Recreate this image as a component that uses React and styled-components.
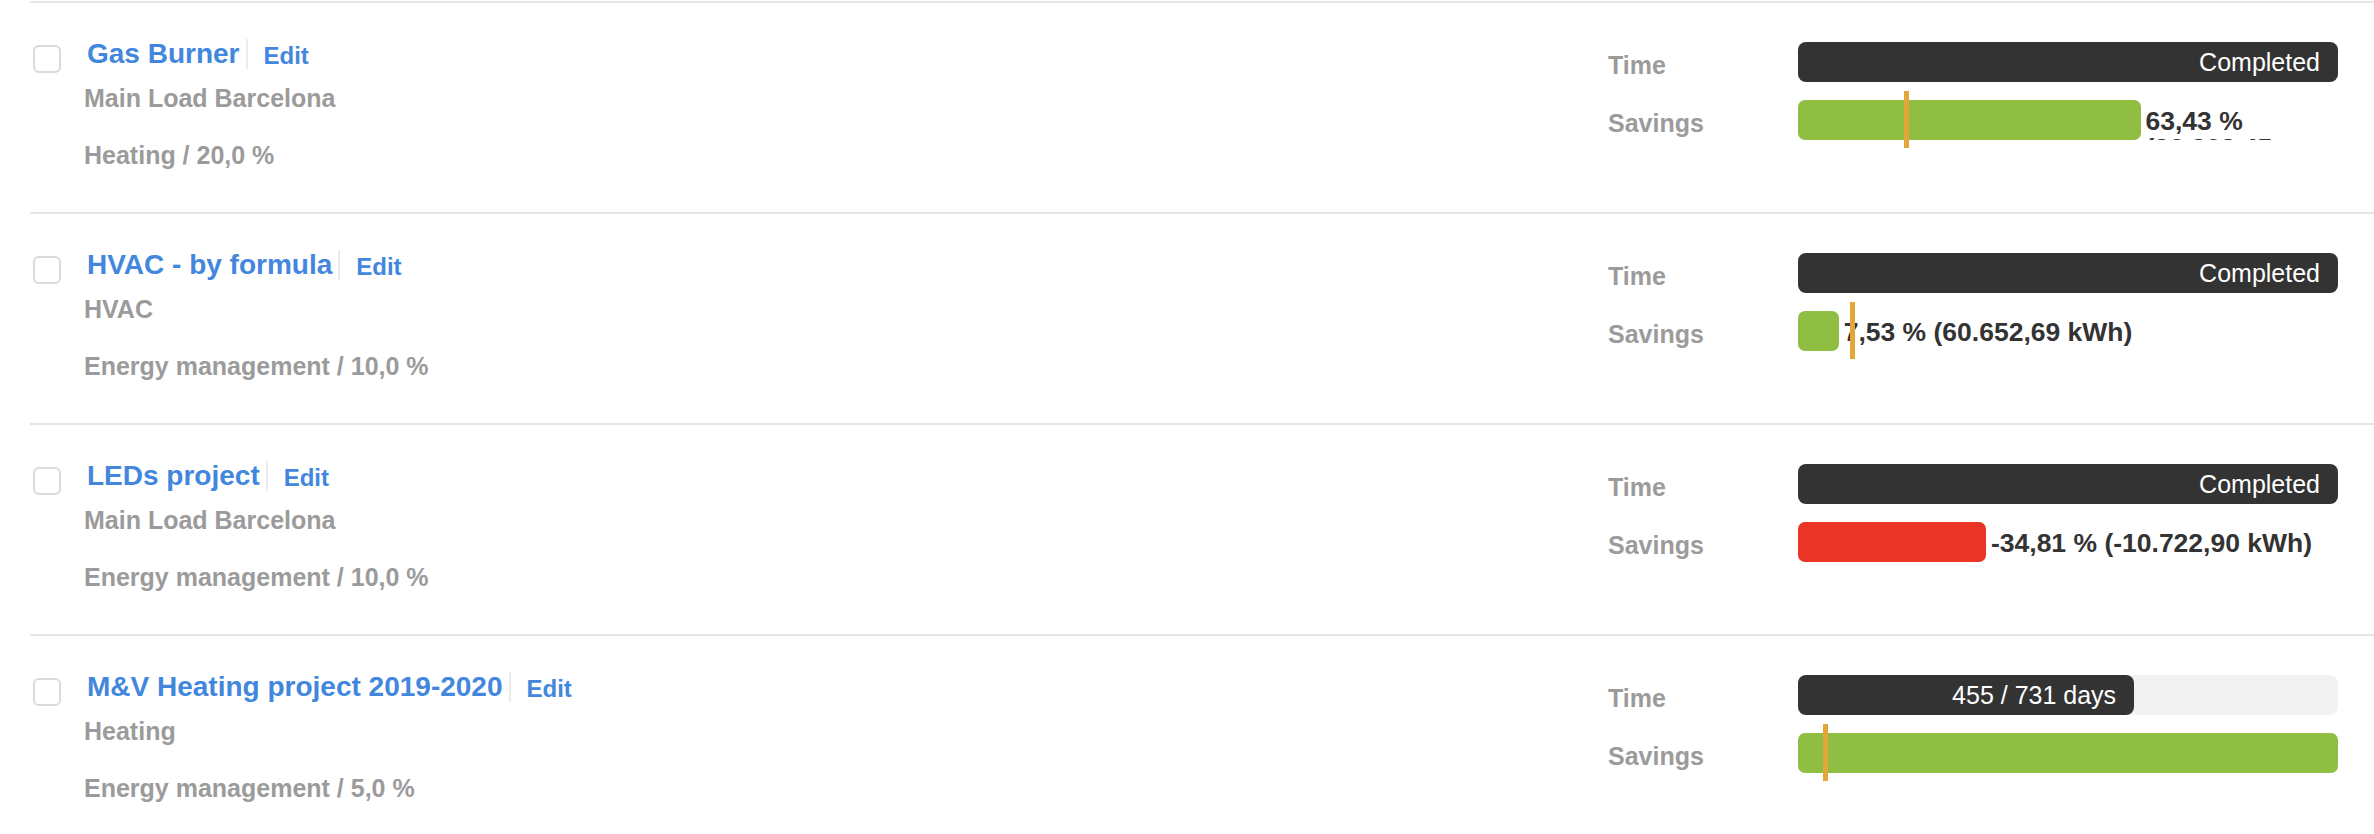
import React from 'react';
import styled, { createGlobalStyle } from 'styled-components';

const BLUE = '#4287dd';
const GRAY = '#9b9b9b';
const DARK = '#333333';
const GREEN = '#8fbe43';
const RED = '#e93426';
const ORANGE = '#e2a63b';

const GlobalStyle = createGlobalStyle`
  html, body {
    margin: 0;
    padding: 0;
    overflow: hidden;
    background: #fff;
  }

  body {
    font-family: "Liberation Sans", Arial, sans-serif;
  }
`;

const ProjectList = styled.ul`
  list-style: none;
  margin: 0 0 0 30px;
  padding: 1px 0 0;
`;

const ProjectRow = styled.li`
  display: flex;
  align-items: flex-start;
  box-sizing: border-box;
  height: 211px;
  border-top: 2px solid #e6e6e6;
`;

const Checkbox = styled.input.attrs({ type: 'checkbox' })`
  appearance: none;
  flex-shrink: 0;
  box-sizing: border-box;
  width: 28px;
  height: 28px;
  margin: 42px 0 0 3px;
  border: 2px solid #dadada;
  border-radius: 6px;
  background: #fff;
`;

const Info = styled.div`
  display: flex;
  flex-direction: column;
  margin-left: 23px;
  padding-top: 36px;
`;

const TitleLine = styled.div`
  display: flex;
  align-items: flex-start;
  padding-left: 3px;
`;

const Title = styled.a`
  padding-right: 6px;
  border-right: 2px solid #ececec;
  color: ${BLUE};
  font-size: 28px;
  font-weight: 700;
  line-height: 30px;
  text-decoration: none;
  white-space: nowrap;
`;

const EditLink = styled.a`
  margin-left: 16px;
  padding-top: 2px;
  color: ${BLUE};
  font-size: 24px;
  font-weight: 700;
  line-height: 30px;
  text-decoration: none;
`;

const Sub = styled.div`
  margin-top: ${({ $top }) => $top}px;
  color: ${GRAY};
  font-size: 25px;
  font-weight: 700;
  line-height: 30px;
  white-space: nowrap;
`;

const Stats = styled.div`
  display: grid;
  grid-template-columns: 190px 540px;
  row-gap: 18px;
  margin-left: auto;
  padding: 39px 36px 0 0;
`;

const StatLabel = styled.div`
  box-sizing: border-box;
  height: 40px;
  padding-top: 6px;
  color: ${GRAY};
  font-size: 25px;
  font-weight: 700;
  line-height: 34px;
`;

const TimeTrack = styled.div`
  height: 40px;
  border-radius: 8px;
  background: #f2f2f2;
`;

const TimeFill = styled.div`
  box-sizing: border-box;
  height: 100%;
  padding-right: 18px;
  border-radius: 8px;
  background: ${DARK};
  color: #fff;
  font-size: 25px;
  line-height: 40px;
  text-align: right;
  white-space: nowrap;
`;

const SavingsTrack = styled.div`
  position: relative;
  height: 40px;
`;

const SavingsClip = styled.div`
  display: flex;
  height: 40px;
  overflow: hidden;
`;

const SavingsBar = styled.div`
  flex-shrink: 0;
  height: 40px;
  border-radius: 7px;
  background: ${({ $negative }) => ($negative ? RED : GREEN)};
`;

const SavingsValue = styled.div`
  flex: 1 1 0;
  min-width: 0;
  margin-left: 5px;
  padding-top: 8px;
  color: ${DARK};
  font-size: 26.5px;
  font-weight: 700;
  line-height: 27.3px;
`;

const TargetMarker = styled.span`
  position: absolute;
  top: -9px;
  z-index: 1;
  width: 5px;
  height: 57px;
  background: ${ORANGE};
`;

const projects = [
  {
    id: 1,
    name: 'Gas Burner',
    load: 'Main Load Barcelona',
    category: 'Heating / 20,0 %',
    target: 20,
    days: null,
    savings: 63.43,
    savingsText: '63,43 % (26.308,45 kWh)'
  },
  {
    id: 2,
    name: 'HVAC - by formula',
    load: 'HVAC',
    category: 'Energy management / 10,0 %',
    target: 10,
    days: null,
    savings: 7.53,
    savingsText: '7,53 % (60.652,69 kWh)'
  },
  {
    id: 3,
    name: 'LEDs project',
    load: 'Main Load Barcelona',
    category: 'Energy management / 10,0 %',
    target: 10,
    days: null,
    savings: -34.81,
    savingsText: '-34,81 % (-10.722,90 kWh)'
  },
  {
    id: 4,
    name: 'M&V Heating project 2019-2020',
    load: 'Heating',
    category: 'Energy management / 5,0 %',
    target: 5,
    days: { done: 455, total: 731 },
    savings: 148.2,
    savingsText: null
  }
];

const ProjectStats = ({ target, days, savings, savingsText }) => {
  const timeWidth = days ? (days.done / days.total) * 100 : 100;
  const negative = savings < 0;
  const barWidth = Math.min(Math.abs(savings), 100);

  return (
    <Stats>
      <StatLabel>Time</StatLabel>
      <TimeTrack>
        <TimeFill style={{ width: `${timeWidth}%` }}>
          {days ? `${days.done} / ${days.total} days` : 'Completed'}
        </TimeFill>
      </TimeTrack>

      <StatLabel>Savings</StatLabel>
      <SavingsTrack>
        <SavingsClip>
          <SavingsBar $negative={negative} style={{ width: `${barWidth}%` }} />
          {savingsText && <SavingsValue>{savingsText}</SavingsValue>}
        </SavingsClip>
        {!negative && (
          <TargetMarker style={{ left: `calc(${target}% - 2px)` }} />
        )}
      </SavingsTrack>
    </Stats>
  );
};

const App = () => (
  <>
    <GlobalStyle />
    <ProjectList>
      {projects.map(({ id, name, load, category, ...stats }) => (
        <ProjectRow key={id}>
          <Checkbox />
          <Info>
            <TitleLine>
              <Title href="#">{name}</Title>
              <EditLink href="#">Edit</EditLink>
            </TitleLine>
            <Sub $top={12}>{load}</Sub>
            <Sub $top={27}>{category}</Sub>
          </Info>
          <ProjectStats {...stats} />
        </ProjectRow>
      ))}
    </ProjectList>
  </>
);

export default App;
